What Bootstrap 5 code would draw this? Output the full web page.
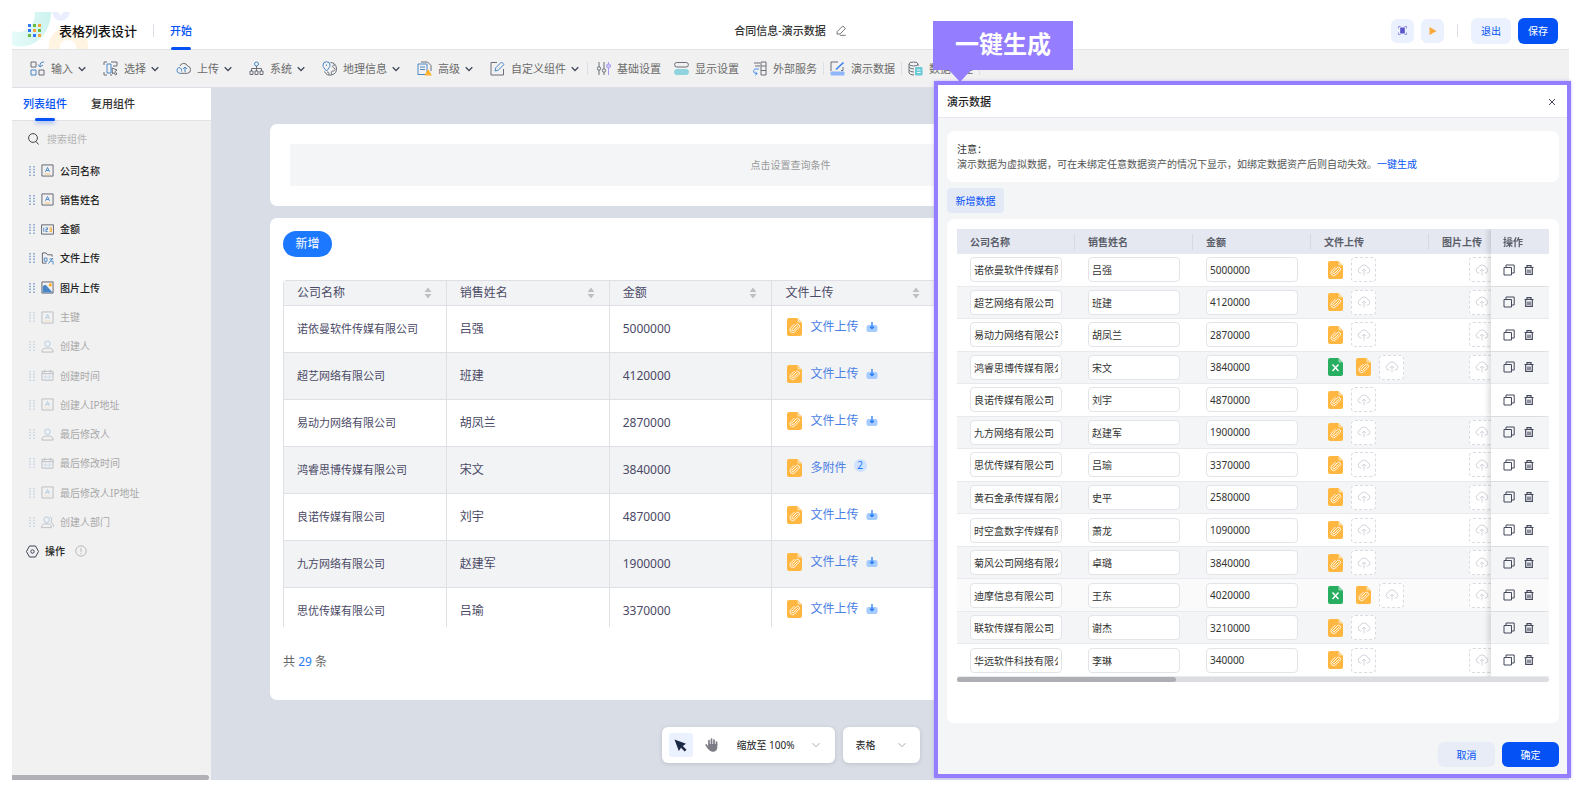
<!DOCTYPE html>
<html lang="zh-CN">
<head>
<meta charset="utf-8">
<meta name="viewport" content="width=device-width, initial-scale=1">
<title>表格列表设计</title>
<link rel="stylesheet" href="https://cdn.jsdelivr.net/npm/bootstrap@5.3.0/dist/css/bootstrap.min.css">
<style>
:root{--brand:#0452f5;--line:#dcdfe6;--accent:#957dff}
body{font-family:"Noto Sans","Noto Sans CJK SC",sans-serif;font-size:11px;line-height:16px;color:#333;background:#fff;height:100vh;overflow:hidden}
svg{flex:none;display:block;fill:none}
svg:not([stroke]){stroke:currentColor}
a{text-decoration:none}
.btn{--bs-btn-font-size:10px;--bs-btn-line-height:16px;--bs-btn-padding-x:0;--bs-btn-padding-y:0;--bs-btn-border-width:0px}
.shell{height:100vh;padding:12px 16px 11px 12px}
.topbar{height:38px;border-bottom:1px solid #e2e4e8;background:#fff}
.topbar .deco{left:0;top:0;width:80px;height:37px}
.app-title{font-size:13px;font-weight:500;color:#111;margin-left:18px}
.vbar{width:1px;height:13px;background:#dcdfe6}
.tab-link{position:relative;color:#333;font-weight:500;display:flex;align-items:center}
.tab-link.on{color:var(--brand)}
.tab-link.on::after{content:"";position:absolute;bottom:-1px;left:50%;width:20px;height:3px;margin-left:-10px;border-radius:2px;background:var(--brand)}
.tab-glow.on::after{box-shadow:0 2px 4px rgba(4,82,245,.4)}
.sq{width:23px;height:24px;border-radius:6px;background:#ebf1fe}
.btn-soft{background:#ebf1fe;color:var(--brand);border-radius:6px;--bs-btn-hover-bg:#dfe8fd}
.btn-main{background:var(--brand);color:#fff;border-radius:6px;--bs-btn-hover-bg:#0346d6;--bs-btn-hover-color:#fff}
.ribbon{height:38px;background:#f1f1f1;border-bottom:1px solid var(--line);gap:17px;padding-left:18px}
.ribbon .btn{font-size:11px;color:#6b6b6b;display:flex;align-items:center;gap:6px;white-space:nowrap}
.ribbon .chev{margin-left:-1px}
.ribbon .grp{display:flex;align-items:center;gap:13px}
.ribbon .grp2{display:flex;align-items:center;gap:6px;margin-left:-7px}
.i15{width:15px;height:15px;color:#6a6f78}
.i15 .b{stroke:#4a86c5}
.chev{width:8px;height:8px;color:#444b5c;stroke-width:1.3}
.side{width:199px;background:#f1f1f1}
.side-tabs{height:33px;background:#fff;border-bottom:1px solid #e0e2e6;padding-left:11px;gap:24px}
.search-row{height:35px;padding:0 16px}
.search-row input{border:0;background:none;font-size:10px;line-height:16px;padding:0;width:120px;outline:0}
.search-row input::placeholder{color:#b4b4b4;opacity:1}
.comp-list{display:grid;grid-template-rows:repeat(14,1fr);height:410px;font-size:10px;color:#222;font-weight:500}
.comp-list li{display:flex;align-items:center;gap:6px;padding-left:17px}
.comp-list li:last-child{padding-left:14px}
.comp-list .off{opacity:.36;font-weight:400}
.i14{width:13px;height:13px;color:#5c626d}
.side-bar{height:5px;width:197px;border-radius:0 3px 3px 0;background:#b0b0b6}
.stage{background:#d9dde5;padding:36px 258px 0 59px;min-width:0}
.panel{background:#fff;border-radius:7px}
.query-box{background:#f4f5f7;height:42px;color:#999;font-size:10px}
.btn-new{width:49px;height:26px;border-radius:13px;background:#1b78ff;color:#fff;font-size:12px;--bs-btn-hover-bg:#1b78ff;--bs-btn-hover-color:#fff}
.list-clip{height:347px;overflow:hidden;border-radius:4px 4px 0 0}
.list-tb{table-layout:fixed;width:978px;border-collapse:collapse;color:#4b4a66;font-size:12px}
.list-tb th,.list-tb td{border:1px solid #dfe0e6;padding:0 0 0 13px}
.list-tb th{height:25px;font-weight:400;background:#f2f3f5}
.list-tb td{height:47px}
.list-tb td:first-child{font-size:11px}
.list-tb tbody tr:nth-child(even){background:#f2f3f5}
.sorter{width:8px;height:12px;margin-right:14px;fill:#bfbfbf}
.file-cell{padding:0 0 4px 2px}
.file-link{color:#4a80e6;margin:0 7px 0 8px}
.cnt{position:relative;top:-3px;width:13px;height:13px;line-height:13px;border-radius:7px;background:#cfe2ff;color:#1b78ff;text-align:center;font-size:10px}
.float{left:0;right:199px;bottom:17px;gap:8px}
.float .box{height:36px;background:#fff;border-radius:6px;box-shadow:0 1px 4px rgba(60,70,100,.18)}
.pick{appearance:none;border:0;outline:0;color:#222;font-size:10px;line-height:16px;background:#fff url("data:image/svg+xml,%3Csvg xmlns='http://www.w3.org/2000/svg' viewBox='0 0 8 8'%3E%3Cpath d='M.5 2.2 4 5.7l3.500-3.500' fill='none' stroke='%23aaa'/%3E%3C/svg%3E") right center/8px 8px no-repeat}
.drawer{position:absolute;top:81px;right:14px;bottom:13px;width:637px;border:4px solid var(--accent);background:#f4f5f7;z-index:5;box-shadow:0 0 3px rgba(149,125,255,.5)}
.drawer-head{height:33px;background:#fff;border-bottom:1px solid #e8e9ec;font-weight:500;color:#222;padding:1px 9px 0 9px}
.x-btn{width:12px;height:12px;color:#333}
.note{padding:11px 10px 0;margin-top:13px;font-size:10px;line-height:15px;color:#555;height:51px}
.btn-add{width:57px;height:25px;border-radius:4px;background:#e4e9f6;color:var(--brand);margin:6px 0}
.grid-clip{overflow:hidden}
.grid-tb{table-layout:fixed;width:1615px;height:448px;border-collapse:separate;border-spacing:0;font-size:10px;color:#333}
.grid-tb th{height:25px;background:#e5e8f1;font-weight:700;color:#5a5e69;padding:0 0 0 13px;background-image:linear-gradient(#d6d9e3,#d6d9e3);background-size:1px 16px;background-position:right center;background-repeat:no-repeat}
.grid-tb th:nth-last-child(-n+2){background-image:none}
.grid-tb td{padding:0 0 0 13px;border-bottom:1px solid #e9eaed;background:#fff}
.grid-tb tr:nth-child(even) td{background:#f4f5f7}
.grid-tb tr.hot td{background:#fafafa}
.grid-tb .pin{position:sticky;right:0;padding-left:12px;box-shadow:-3px 0 5px rgba(0,0,0,.13);clip-path:inset(0 0 0 -8px)}
.grid-tb input{display:block;width:92px;height:25px;border:1px solid #e2e4e8;border-radius:4px;padding:0 3px;font-size:10px;line-height:16px;color:#333;background:#fff;outline:0}
.ic-btn{border:0;padding:0;background:none;color:#44495c}
.ic-btn.up{width:25px;height:25px;border:1px dashed #d9dbe1;border-radius:4px;background:#fff;color:#d3d5dc}
.files{gap:8px;padding-left:4px}
.files .xls{margin-right:5px}
.slot{width:15px}
.track{height:5px;border-radius:3px;background:#dcdde1}
.thumb{height:5px;border-radius:3px;background:#aeafb4}
.foot .btn{width:57px;height:25px}
.callout{position:absolute;z-index:6;top:21px;right:512px;width:140px;height:49px;background:var(--accent);color:#fff;font-size:24px;line-height:46px;font-weight:700;text-align:center}
.callout::after{content:"";position:absolute;left:15px;top:48px;border:12px solid transparent;border-top:13px solid var(--accent);border-bottom:0}
</style>
</head>
<body>
<svg width="0" height="0" class="position-absolute">
<defs>
<symbol id="chev" viewBox="0 0 8 8"><path d="M.7 2.200 4 5.500l3.300-3.300"/></symbol>
<symbol id="clip" viewBox="0 0 15 18"><path d="M2 0h8.500L15 4.500V16a2 2 0 0 1-2 2H2a2 2 0 0 1-2-2V2a2 2 0 0 1 2-2z" fill="#ffb741"/><path d="M10.500 0 15 4.500h-3.500a1 1 0 0 1-1-1z" fill="#ffdc9e"/><path d="m10.700 8.300-4 4.100a1 1 0 0 1-1.500-1.400l4-4.200a1.900 1.900 0 0 1 2.700 2.700l-4.300 4.400a2.800 2.800 0 0 1-4-3.900l3.800-3.900" fill="none" stroke="#fff" stroke-width=".9"/></symbol>
<symbol id="xls" viewBox="0 0 15 18"><path d="M2 0h8.500L15 4.500V16a2 2 0 0 1-2 2H2a2 2 0 0 1-2-2V2a2 2 0 0 1 2-2z" fill="#27ae60"/><path d="M10.500 0 15 4.500h-3.500a1 1 0 0 1-1-1z" fill="#8fd8ac"/><path d="m4.500 6.500 6 6.500m0-6.500-6 6.500" fill="none" stroke="#fff" stroke-width="1.500"/></symbol>
<symbol id="cloud" viewBox="0 0 14 12"><path d="M4.500 9H3.700A2.700 2.700 0 0 1 3.200 3.700a4 4 0 0 1 7.600 0A2.700 2.700 0 0 1 10.300 9h-.8M7 11.500V5M5 7l2-2 2 2"/></symbol>
<symbol id="down" viewBox="0 0 12 12"><path d="M2.500 4h7A2 2 0 0 1 11.500 6v3a2 2 0 0 1-2 2h-7a2 2 0 0 1-2-2V6a2 2 0 0 1 2-2z" fill="#a6ccff" stroke="none"/><path d="M6 1v6.500M4 5.700l2 2 2-2" stroke="#2a7df5" stroke-width="1.300"/></symbol>
<symbol id="sort" viewBox="0 0 8 12"><path d="m4 .5 3.500 4.500h-7zM4 11.500.500 7h7z"/></symbol>
<symbol id="copy" viewBox="0 0 12 12"><path d="M1 3.500h7.500V11H1zM3 3.500V1h8.200v8H8.500"/></symbol>
<symbol id="trash" viewBox="0 0 10 10"><path d="M.5 2.500h9M3 2.500V.7h4v1.800M1.700 2.500v6.800h6.600V2.500M4 4.500V8M6 4.500V8" stroke-width="1.200"/></symbol>
<symbol id="grip" viewBox="0 0 6 10"><path d="M1 0v10M5 0v10" stroke="#5d86c9" stroke-width="1.200" stroke-dasharray="1.500 1.300"/></symbol>
<symbol id="c-a" viewBox="0 0 14 14"><path d="M1 1h12v12H1z"/><path d="M4.800 8.500 7 3.700l2.200 4.800M5.600 7h2.800" stroke="#4a86c5"/><path d="M4 10.800h6" stroke="#ffc56e"/></symbol>
<symbol id="c-n" viewBox="0 0 14 14"><path d="M.6 2h12.800v10H.6z"/><path d="M3 5v4.500M5 5.200h2v1.900H5.200V9.200h2" stroke="#4a86c5"/><path d="M9 5.200h2.200v4H9M9.300 7.200H11" stroke="#f5a623"/></symbol>
<symbol id="c-f" viewBox="0 0 14 14"><path d="M6 12H1.500V1h4l1.500 2h5v2"/><path d="M3.500 6.500h3V10h-3zM12.500 6.500 8 12.500m1.200-5h4M10 10h3v3.500" stroke="#4a86c5"/></symbol>
<symbol id="c-p" viewBox="0 0 14 14"><path d="M1 1h12v12H1z"/><path d="M1.800 5.500 5 4l7.500 8.500H1.800z" fill="#4a86c5" stroke="none"/><circle cx="10" cy="4.200" r="1.700" fill="#ffb020" stroke="none"/></symbol>
<symbol id="c-u" viewBox="0 0 14 14"><circle cx="7" cy="4" r="3" stroke="#4a86c5"/><path d="M1 13c0-3 2-4.200 4-4.200h4c2 0 4 1.200 4 4.200z"/></symbol>
<symbol id="c-d" viewBox="0 0 14 14"><path d="M1 2.500h12V12H1zM1 5h12M4 1v3M10 1v3"/><path d="M1 8.500h12M5 5v7M9 5v7" stroke="#9bbce0"/></symbol>
<symbol id="c-g" viewBox="0 0 14 14"><circle cx="6" cy="4" r="3" stroke="#4a86c5"/><path d="M.5 12.500c0-3 2-4 3.500-4h4c1.500 0 3.200 1 3.200 4zM9.500 1c2 0 3 3 1 5.500 2 1 3 2.500 3 5"/></symbol>
</defs>
</svg>

<div class="shell d-flex flex-column">
  <header class="topbar position-relative d-flex align-items-stretch flex-shrink-0">
    <svg class="deco position-absolute" viewBox="0 0 80 37" stroke="none"><defs><linearGradient id="g1"><stop stop-color="#e6fbfa"/><stop offset="1" stop-color="#cdf3ee"/></linearGradient></defs><path d="M0 19c12 4 23-3 23-19h16c0 22-18 40-39 33z" fill="url(#g1)"/><path d="M40 0h6q3 6 5-0h7c-2 11-16 12-18 0z" fill="#eaeeff"/><path d="M37 38c-2-12 6-22 19-22s22 10 20 22H64c1-6-2-10-8-10s-9 4-8 10z" fill="#fff3e2"/></svg>
    <div class="d-flex align-items-center position-relative" style="padding-left:16px">
      <svg width="13" height="13" viewBox="0 0 13 13" stroke="none"><g fill="#3478f6"><path d="M0 0h3v3H0zM0 5h3v3H0zM5 10h3v3H5z"/></g><g fill="#6cb93f"><path d="M5 0h3v3H5zM10 5h3v3h-3zM0 10h3v3H0z"/></g><g fill="#f5a53a"><path d="M10 0h3v3h-3zM5 5h3v3H5zM10 10h3v3h-3z"/></g></svg>
      <span class="app-title">表格列表设计</span>
      <span class="vbar mx-3"></span>
    </div>
    <a href="#" class="tab-link on">开始</a>
    <div class="position-absolute top-0 bottom-0 start-50 translate-middle-x d-flex align-items-center fw-medium" style="gap:10px">
      <span>合同信息-演示数据</span>
      <svg width="11" height="11" viewBox="0 0 11 11" stroke="#777" stroke-width="1"><path d="M1.500 6.500 7 1l2.800 2.500-5.300 5.300-3.200.4zM4 10.300h6"/></svg>
    </div>
    <div class="ms-auto d-flex align-items-center" style="margin-right:11px">
      <button class="btn sq d-flex align-items-center justify-content-center" aria-label="预览"><svg width="9" height="9" viewBox="0 0 9 9" stroke="#8c92e6"><path d="M.5 2.500v-2h2M6.500.5h2v2M8.500 6.500v2h-2M2.500 8.500h-2v-2"/><path d="M2.200 1.500h4.600v6H2.200z" fill="#5a55c9" stroke="none"/></svg></button>
      <button class="btn sq d-flex align-items-center justify-content-center" style="margin-left:7px" aria-label="运行"><svg width="8" height="8" viewBox="0 0 8 8" stroke="none"><path d="M.5 0v8l7-4z" fill="#fca93c"/></svg></button>
      <span class="vbar" style="margin:0 13px"></span>
      <button class="btn btn-soft" style="width:40px;height:26px">退出</button>
      <button class="btn btn-main" style="width:40px;height:26px;margin-left:7px">保存</button>
    </div>
  </header>

  <nav class="ribbon d-flex align-items-center flex-shrink-0">
    <button class="btn"><svg class="i15" viewBox="0 0 15 15"><path d="M1 1h5v5H1zM9 9h5v5H9z"/><path class="b" d="M1 9h5v5H1zM14 1c-3 0-4 1-4 4m-2-1.500 2 2.500 3-2"/></svg>输入<svg class="chev"><use href="#chev"/></svg></button>
    <button class="btn"><svg class="i15" viewBox="0 0 15 15"><path d="M1 4V1h3M1 11v3h3M9 14H7M8 1h6v4h-4M9 7l5 2-2 1.500L14 13l-1.500 1L11 11.500 9.500 13z"/><path class="b" d="M4 3h4v9H4z"/></svg>选择<svg class="chev"><use href="#chev"/></svg></button>
    <button class="btn"><svg class="i15" viewBox="0 0 15 15"><path d="M4 5a4 4 0 0 1 7.500 0 3.700 3.700 0 0 1 0 7.300H5"/><path class="b" d="M5 12.300H3.500A3 3 0 0 1 3 6.500a3 3 0 0 1 2.500 4M9 11V6M7 8l2-2 2 2"/></svg>上传<svg class="chev"><use href="#chev"/></svg></button>
    <button class="btn"><svg class="i15" viewBox="0 0 15 15"><circle class="b" cx="7.500" cy="3" r="2"/><path d="M7.500 5v5M2.500 10V7.500h10V10M1 10h3v3.500H1zM6 10h3v3.500H6zM11 10h3v3.500h-3z"/></svg>系统<svg class="chev"><use href="#chev"/></svg></button>
    <button class="btn"><svg class="i15" viewBox="0 0 15 15"><path d="M8.500 1.500a6.300 6.300 0 1 1-6 9M13 4c-3 0-3 2-1 3s1 3-1 3-2 2-1 4M5 11c2 0 2 1 2 3"/><path class="b" d="M4.500 10C2 7 1 6 1 4.200a3.500 3.500 0 0 1 7 0C8 6 7 7 4.500 10zM4.500 3.500v1.400"/></svg>地理信息<svg class="chev"><use href="#chev"/></svg></button>
    <button class="btn"><svg class="i15" viewBox="0 0 15 15"><path d="M4 1h6.500L14 4.500V10"/><path class="b" d="M1 3h9v10.500H1zM3 6h5M3 8.500h5"/><path d="m11 8 4 6.500H7.500z" fill="#ffb32c" stroke="none"/></svg>高级<svg class="chev"><use href="#chev"/></svg></button>
    <button class="btn"><svg class="i15" viewBox="0 0 15 15"><path d="M7 1.500H1V14h12.500V8"/><path class="b" d="m5 10 .8-3.200L11.500 1 14 3.500 8.200 9.200z"/></svg>自定义组件<svg class="chev"><use href="#chev"/></svg></button>
    <div class="d-flex align-items-center" style="margin-left:-9px;gap:8px">
      <span class="vbar"></span>
      <div class="grp">
        <button class="btn"><svg class="i15" viewBox="0 0 15 15"><path d="M3 1v5M3 9v5M8 1v7M8 11v3"/><circle cx="3" cy="7.500" r="1.700"/><circle cx="8" cy="9.500" r="1.700"/><circle cx="12.500" cy="5" r="2" stroke="#a79bf0" fill="#cfc7fa"/><path d="M12.500 1v2M12.500 7v7" stroke="#a79bf0"/></svg>基础设置</button>
        <button class="btn"><svg class="i15" viewBox="0 0 15 15"><rect x=".6" y="1.500" width="13.800" height="4.500" rx="2.200"/><rect x=".6" y="8.500" width="13.800" height="5" rx="2" fill="#8ed3de" stroke="#8ed3de"/></svg>显示设置</button>
        <button class="btn"><svg class="i15" viewBox="0 0 15 15"><path d="M2 2h6M3 5h5M9 1h5v13H9zM9 5h5M9 9.500h5"/><path d="M7 8H3c-3 2-1 5 2 4.500m-2-2 2 2-1.500 2" stroke="#4b8ff5"/></svg>外部服务</button>
        <div class="grp2"><span class="vbar"></span><button class="btn"><svg class="i15" viewBox="0 0 15 15"><path d="M8 1H1v9M11 9.500h2V6"/><path d="m6 8.500 7.500-7" stroke="#3b82f0" stroke-width="1.600"/><rect x=".5" y="10.500" width="14" height="4" rx="1" fill="#8db7f8" stroke="none"/></svg>演示数据</button></div>
        <div class="grp2"><span class="vbar"></span><button class="btn"><svg class="i15" viewBox="0 0 15 15"><ellipse cx="5.500" cy="3" rx="4.500" ry="2"/><path d="M1 3v9q1 2 5 2M1 6q1 2 5 2M1 9q1 2 5 2M10 3v2"/><rect x="7" y="6" width="7.500" height="8.500" rx="1" fill="#6cc9d6" stroke="none"/><path d="M9 9h3.500M9 11.500h3.500" stroke="#e8fafc"/></svg>数据管理</button></div>
        <div class="grp2"><span class="vbar"></span></div>
      </div>
    </div>
  </nav>

  <div class="d-flex flex-grow-1 position-relative" style="min-height:0">
    <aside class="side d-flex flex-column flex-shrink-0">
      <div class="side-tabs d-flex align-items-stretch">
        <a href="#" class="tab-link tab-glow on">列表组件</a>
        <a href="#" class="tab-link">复用组件</a>
      </div>
      <label class="search-row d-flex align-items-center gap-2 mb-0">
        <svg width="11" height="12" viewBox="0 0 11 12" stroke="#444"><circle cx="5" cy="5" r="4.400"/><path d="m8 8.500 2.500 3"/></svg>
        <input type="text" placeholder="搜索组件" aria-label="搜索组件">
      </label>
      <ul class="comp-list list-unstyled mb-0" id="comps"></ul>
      <div class="side-bar mt-auto"></div>
    </aside>

    <main class="stage flex-grow-1 position-relative overflow-hidden">
      <section class="panel" style="padding:20px">
        <div class="query-box d-flex align-items-center justify-content-center">点击设置查询条件</div>
      </section>
      <section class="panel" style="margin-top:12px;padding:13px 13px 30px">
        <button class="btn btn-new">新增</button>
        <div class="list-clip" style="margin-top:23px">
          <table class="list-tb">
            <thead><tr id="lhead"></tr></thead>
            <tbody id="lbody"></tbody>
          </table>
        </div>
        <div style="font-size:12px;color:#666;margin-top:27px">共 <span style="color:#2a7df5">29</span> 条</div>
      </section>
      <div class="float position-absolute d-flex justify-content-center">
        <div class="box d-flex align-items-center" style="width:173px;padding:0 15px 0 7px">
          <button class="btn d-flex align-items-center justify-content-center" style="width:24px;height:24px;background:#ebf1fe;border-radius:3px" aria-label="选择"><svg width="13" height="13" viewBox="0 0 13 13" stroke="none"><path d="M.5.5 12 4.800 8.800 7l3.700 3.700-1.800 1.800L7 8.800 4.800 12z" fill="#1d2a44"/></svg></button>
          <button class="btn" style="margin-left:12px" aria-label="拖动"><svg width="13" height="14" viewBox="0 0 13 14" stroke="#7c7c86" stroke-width="1.700" stroke-linecap="round"><path d="M4 7V2.500M6.500 6V1.200M9 6.500V2M11.500 7V4M1.200 7l2.500 3.500"/><path d="M3.200 6h9.100v3.500c0 2.500-1.800 4.300-4.300 4.300S4 12.500 3.200 10z" fill="#7c7c86" stroke="none"/></svg></button>
          <select class="pick flex-grow-1" style="margin-left:19px" aria-label="缩放"><option>缩放至 100%</option></select>
        </div>
        <div class="box d-flex align-items-center" style="width:77px;padding:0 14px 0 13px">
          <select class="pick w-100" aria-label="视图"><option>表格</option></select>
        </div>
      </div>
    </main>
  </div>
</div>

<section class="drawer d-flex flex-column" aria-label="演示数据">
  <div class="drawer-head d-flex align-items-center justify-content-between">
    <span>演示数据</span>
    <button class="ic-btn x-btn d-flex align-items-center justify-content-center" aria-label="关闭"><svg width="8" height="8" viewBox="0 0 8 8"><path d="m1 1 6 6m0-6L1 7"/></svg></button>
  </div>
  <div class="flex-grow-1 d-flex flex-column" style="padding:0 8px 7px 9px;min-height:0">
    <div class="panel note">
      <div style="color:#333">注意：</div>
      <div class="text-nowrap">演示数据为虚拟数据，可在未绑定任意数据资产的情况下显示，如绑定数据资产后则自动失效。<a href="#" style="color:var(--brand)">一键生成</a></div>
    </div>
    <div><button class="btn btn-add d-block">新增数据</button></div>
    <div class="panel flex-grow-1" style="padding:10px 10px 0;min-height:0">
      <div class="grid-clip">
        <table class="grid-tb">
          <colgroup><col style="width:118px"><col style="width:118px"><col style="width:118px"><col style="width:118px"><col><col style="width:58px"></colgroup>
          <thead><tr><th>公司名称</th><th>销售姓名</th><th>金额</th><th>文件上传</th><th>图片上传</th><th class="pin">操作</th></tr></thead>
          <tbody id="gbody"></tbody>
        </table>
      </div>
      <div class="track"><div class="thumb" style="width:37%"></div></div>
    </div>
    <div class="foot d-flex justify-content-end" style="gap:7px;padding-top:19px">
      <button class="btn btn-soft" style="background:#e7ecf7">取消</button>
      <button class="btn btn-main">确定</button>
    </div>
  </div>
</section>
<div class="callout">一键生成</div>

<script src="https://cdn.jsdelivr.net/npm/bootstrap@5.3.0/dist/js/bootstrap.bundle.min.js"></script>
<script>
const byId = id => document.getElementById(id);
const use = (id, w, h, cls = '', attrs = '') => `<svg class="${cls}" width="${w}" height="${h}" ${attrs}><use href="#${id}"/></svg>`;
const flat = 'stroke="none"';

const comps = [['a','公司名称'],['a','销售姓名'],['n','金额'],['f','文件上传'],['p','图片上传'],['a','主键',1],['u','创建人',1],['d','创建时间',1],['a','创建人IP地址',1],['u','最后修改人',1],['d','最后修改时间',1],['a','最后修改人IP地址',1],['g','创建人部门',1]];
byId('comps').innerHTML = comps.map(([k, t, off]) =>
  `<li class="${off ? 'off' : ''}">${use('grip', 6, 10)}${use('c-' + k, 13, 13, 'i14')}<span>${t}</span></li>`).join('') +
  `<li><svg width="13" height="13" viewBox="0 0 13 13" stroke="#3d4358"><path d="M3.500 1h6l3 5.500-3 5.500h-6l-3-5.500z"/><circle cx="6.500" cy="6.500" r="1.700"/></svg><span class="me-1">操作</span><svg width="12" height="12" viewBox="0 0 12 12" stroke="#bbb"><circle cx="6" cy="6" r="5.200"/><path d="M6 3v4M6 8v1.200"/></svg></li>`;

// name, person, amount, has spreadsheet, has picture slot
const rows = [
  ['诺依曼软件传媒有限公司','吕强','5000000',0,1],
  ['超艺网络有限公司','班建','4120000',0,1],
  ['易动力网络有限公司','胡凤兰','2870000',0,1],
  ['鸿睿思博传媒有限公司','宋文','3840000',1,1],
  ['良诺传媒有限公司','刘宇','4870000',0,0],
  ['九方网络有限公司','赵建军','1900000',0,1],
  ['思优传媒有限公司','吕瑜','3370000',0,1],
  ['黄石金承传媒有限公司','史平','2580000',0,1],
  ['时空盒数字传媒有限公司','萧龙','1090000',0,1],
  ['菊风公司网络有限公司','卓璐','3840000',0,1],
  ['迪摩信息有限公司','王东','4020000',1,1],
  ['联软传媒有限公司','谢杰','3210000',0,0],
  ['华远软件科技有限公司','李琳','340000',0,1]];

byId('lhead').innerHTML = ['公司名称','销售姓名','金额','文件上传','',''].map(t =>
  `<th><div class="d-flex align-items-center justify-content-between">${t}${use('sort', 8, 12, 'sorter', flat)}</div></th>`).join('');
byId('lbody').innerHTML = rows.slice(0, 7).map(r =>
  `<tr><td>${r[0]}</td><td>${r[1]}</td><td>${r[2]}</td><td><div class="d-flex align-items-center file-cell">${use('clip', 15, 18, '', flat)}<a href="#" class="file-link">${r[3] ? '多附件' : '文件上传'}</a>${r[3] ? '<span class="cnt">2</span>' : use('down', 12, 12)}</div></td><td></td><td></td></tr>`).join('');

const up = `<button class="ic-btn up d-flex align-items-center justify-content-center" aria-label="上传">${use('cloud', 14, 12)}</button>`;
byId('gbody').innerHTML = rows.map((r, i) =>
  `<tr class="${i === 10 ? 'hot' : ''}">` +
  [['公司名称', 0], ['销售姓名', 1], ['金额', 2]].map(([l, k]) => `<td><input type="text" value="${r[k]}" aria-label="${l}"></td>`).join('') +
  `<td><div class="d-flex align-items-center files">${r[3] ? use('xls', 15, 18, 'xls', flat) : ''}${use('clip', 15, 18, '', flat)}${up}</div></td>` +
  `<td><div class="d-flex files">${r[4] ? '<span class="slot"></span>' + up : ''}</div></td>` +
  `<td class="pin"><div class="d-flex align-items-center" style="gap:9px"><button class="ic-btn" aria-label="复制">${use('copy', 12, 12)}</button><button class="ic-btn" aria-label="删除">${use('trash', 10, 10)}</button></div></td></tr>`).join('');
</script>
</body>
</html>
